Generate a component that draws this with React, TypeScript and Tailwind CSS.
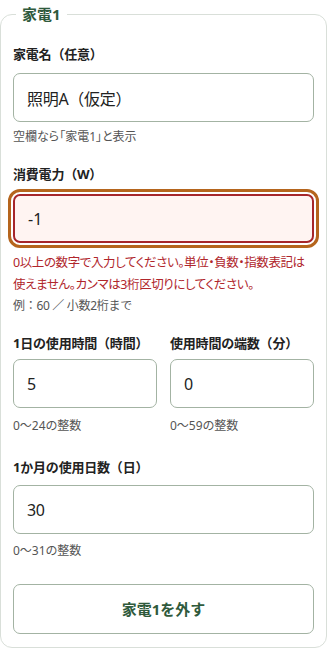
import React from 'react';

const font = { fontFamily: '"Noto Sans", "Noto Sans CJK JP", sans-serif' };

const palt = "[font-feature-settings:'palt']";
const inputBase = 'w-full h-[49px] rounded-[7px] border border-[#a3b3a3] bg-white px-[13px] text-[16px] tracking-[-0.3px] text-[#222] outline-none';
const labelCls = 'text-[13px] font-bold leading-[20px] tracking-[-0.2px] text-[#222]';
const helpCls = `text-[12px] leading-[18px] text-[#555] ${palt}`;

export default function App() {
  return (
    <div className="w-[328px] h-[649px] bg-white" style={font}>
      <fieldset className="m-0 h-[648px] w-[327px] rounded-[12px] border border-[#d9dfd9] px-[12px] pb-[14px] pt-0">
        <legend className="ml-[3px] px-[6px] text-[15px] font-bold leading-[28px] text-[#2f5a3c]">家電1</legend>

        <div className="mt-[16px] flex flex-col">
          <label className={labelCls}>家電名（任意）</label>
          <input className={`${inputBase} mt-[9px]`} defaultValue="照明A（仮定）" />
          <p className={`${helpCls} mt-[6px]`}>空欄なら「家電1」と表示</p>
        </div>

        <div className="mt-[18px] flex flex-col">
          <label className={labelCls}>消費電力（W）</label>
          <input
            className="mt-[10px] w-full h-[49px] rounded-[7px] border-2 border-[#a6262b] bg-[#fff4f2] px-[13px] text-[16px] text-[#222] outline-[3px] outline-solid outline-offset-[2px] outline-[#b5651d]"
            defaultValue="-1"
          />
          <p className={`mt-[9px] text-[12.5px] leading-[22px] tracking-[-0.4px] text-[#b0262c] ${palt}`}>
            0以上の数字で入力してください。単位・負数・指数表記は
            <br />
            使えません。カンマは3桁区切りにしてください。
          </p>
          <p className="mt-[2px] text-[12px] leading-[16px] tracking-[-0.3px] text-[#555]">例：60 ／ 小数2桁まで</p>
        </div>

        <div className="mt-[19px] grid grid-cols-2 gap-[13px]">
          <div className="flex flex-col">
            <label className={labelCls}>1日の使用時間（時間）</label>
            <input className={`${inputBase} mt-[6px]`} defaultValue="5" />
            <p className={`${helpCls} mt-[9px]`}>0〜24の整数</p>
          </div>
          <div className="flex flex-col">
            <label className={labelCls}>使用時間の端数（分）</label>
            <input className={`${inputBase} mt-[6px]`} defaultValue="0" />
            <p className={`${helpCls} mt-[9px]`}>0〜59の整数</p>
          </div>
        </div>

        <div className="mt-[22px] flex flex-col">
          <label className={labelCls}>1か月の使用日数（日）</label>
          <input className={`${inputBase} mt-[8px]`} defaultValue="30" />
          <p className={`${helpCls} mt-[8px]`}>0〜31の整数</p>
        </div>

        <button className="mt-[24px] w-full h-[50px] rounded-[7px] border border-[#a3b3a3] bg-white text-[15px] font-bold text-[#2f5a3c]">
          家電1を外す
        </button>
      </fieldset>
    </div>
  );
}
